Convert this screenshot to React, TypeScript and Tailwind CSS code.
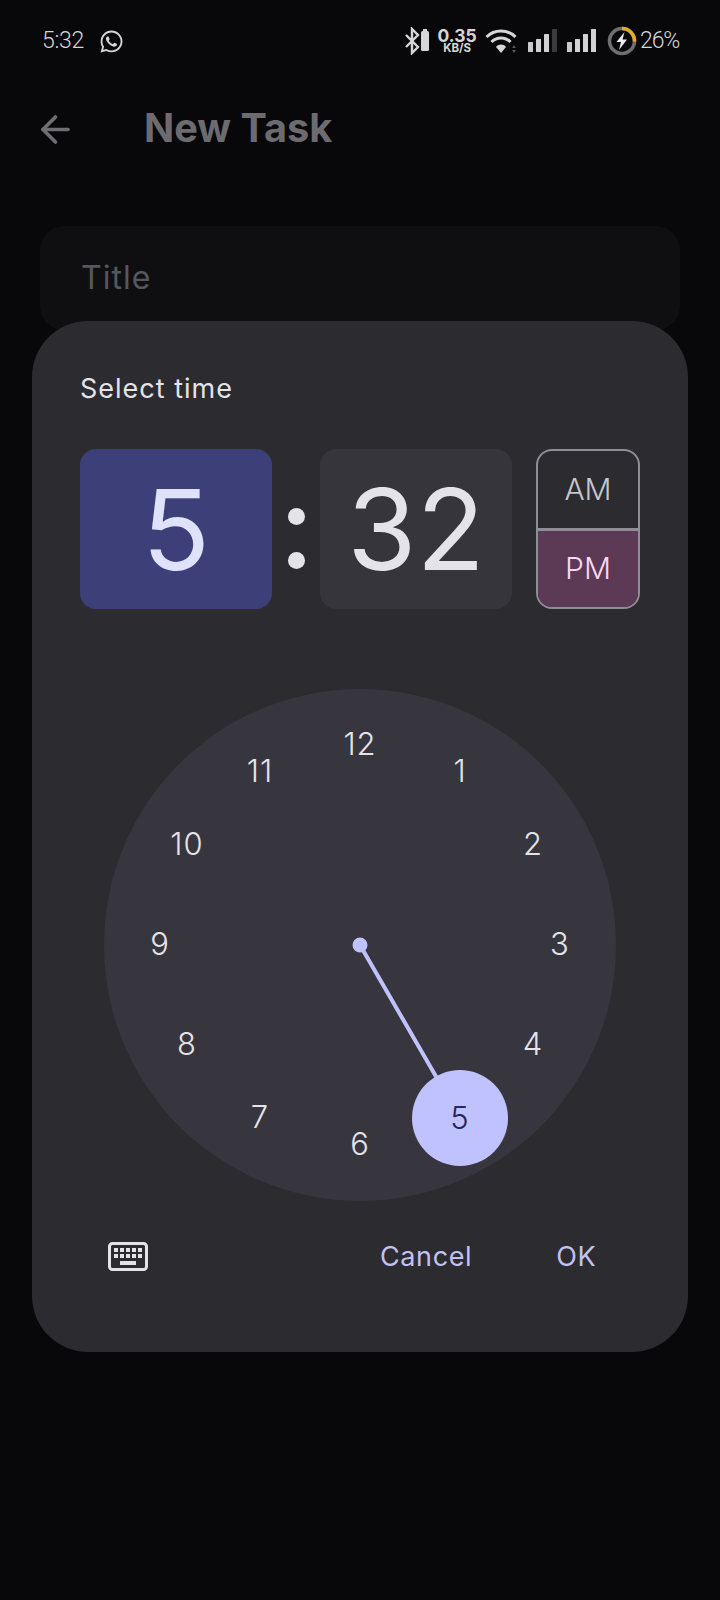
import { ArrowLeft } from "lucide-react";
import { FaWhatsapp } from "react-icons/fa";

const dialNumbers = [
  { label: "12", x: 200, y: 55 },
  { label: "1", x: 300, y: 82 },
  { label: "2", x: 373, y: 155 },
  { label: "3", x: 400, y: 255 },
  { label: "4", x: 373, y: 355 },
  { label: "6", x: 200, y: 455 },
  { label: "7", x: 100, y: 428 },
  { label: "8", x: 27, y: 355 },
  { label: "9", x: 0, y: 255 },
  { label: "10", x: 27, y: 155 },
  { label: "11", x: 100, y: 82 },
];

function Signal({ dimLast }: { dimLast?: boolean }) {
  return (
    <svg width="31" height="24" viewBox="0 0 31 24">
      <rect x="1" y="13" width="5" height="10" rx="0.5" fill="#c9c9c9" />
      <rect x="9" y="10" width="5" height="13" rx="0.5" fill="#d2d2d2" />
      <rect x="17" y="5" width="5" height="18" rx="0.5" fill="#d2d2d2" />
      <rect x="25" y="0" width="5" height="23" rx="0.5" fill={dimLast ? "#3a3a3a" : "#d2d2d2"} />
    </svg>
  );
}

function StatusBar() {
  return (
    <div className="flex h-[82px] items-center justify-between pl-[42px] pr-[41px] text-[#d6d6d6]">
      <div className="flex items-center gap-[15px]">
        <span className="font-['Roboto',sans-serif] text-[23px] font-light tracking-[-0.3px]">5:32</span>
        <FaWhatsapp size={25} color="#d6d6d6" />
      </div>
      <div className="flex items-center">
        <svg width="26" height="28" viewBox="0 0 26 28" fill="none" className="mr-[7px]">
          <path d="M2 8l12 12-6 6V2l6 6L2 20" stroke="#d6d6d6" strokeWidth="2.4" />
          <rect x="17" y="4" width="8" height="20" rx="1.5" fill="#d6d6d6" />
          <rect x="19" y="2" width="4" height="3" fill="#d6d6d6" />
        </svg>
        <div className="mr-[8px] flex w-[40px] flex-col items-center font-bold leading-none">
          <span className="text-[17.5px] leading-[15px]">0.35</span>
          <span className="text-[11.5px] leading-[11px]">KB/S</span>
        </div>
        <svg width="34" height="26" viewBox="0 0 34 26" fill="none" className="mr-[8px]">
          <path d="M1.5 9C9.5 1 22.5 1 30.5 9" stroke="#d6d6d6" strokeWidth="3" />
          <path d="M6.5 14C11.5 8.5 20.5 8.5 25.5 14" stroke="#d6d6d6" strokeWidth="3" />
          <path d="M11 19C13.8 15.8 18.2 15.8 21 19L16 25Z" fill="#d6d6d6" />
          <path d="M29 17l2 3h-4zM29 25l2-3h-4z" fill="#555" />
        </svg>
        <Signal dimLast />
        <div className="w-[8px]" />
        <Signal />
        <svg width="30" height="30" viewBox="0 0 30 30" fill="none" className="ml-[10px] mr-[3px]">
          <circle cx="15" cy="15" r="12.5" stroke="#6f6f6f" strokeWidth="3.6" />
          <path d="M15 2.5A12.5 12.5 0 0 1 27.5 15.6" stroke="#e2a92b" strokeWidth="3.6" />
          <path d="M17.5 6l-8 10h4.5l-2 8 8-10.500h-4.500z" fill="#ececec" />
        </svg>
        <span className="font-['Roboto',sans-serif] text-[23px] font-light tracking-[-1.2px]">26%</span>
      </div>
    </div>
  );
}

function TimeField({ value, active }: { value: string; active?: boolean }) {
  return (
    <div
      className={`flex h-[160px] w-[192px] items-center justify-center rounded-[16px] text-[112px] font-normal leading-none ${
        active ? "bg-[#3d4078] text-[#e0e1fb]" : "bg-[#36353c] text-[#e4e3e8]"
      }`}
    >
      {value}
    </div>
  );
}

function Dial() {
  return (
    <div className="relative mx-auto mt-[80px] h-[512px] w-[512px] rounded-full bg-[#37363e] text-[31px] font-light tracking-[1px] text-[#e4e3e8]">
      <svg width="512" height="512" viewBox="0 0 512 512" className="absolute left-0 top-0">
        <circle cx="256" cy="256" r="7.5" fill="#c0c2ff" />
        <line x1="256" y1="256" x2="356" y2="429" stroke="#c0c2ff" strokeWidth="4" />
      </svg>
      {dialNumbers.map((n) => (
        <span
          key={n.label}
          className="absolute flex h-[48px] w-[48px] items-center justify-center"
          style={{ left: n.x + 56 - 24, top: n.y - 24 }}
        >
          {n.label}
        </span>
      ))}
      <span className="absolute left-[308px] top-[381px] flex h-[96px] w-[96px] items-center justify-center rounded-full bg-[#c0c2ff] text-[#24265c]">
        5
      </span>
    </div>
  );
}

function KeyboardIcon() {
  return (
    <svg width="40" height="29" viewBox="0 0 40 29" fill="none">
      <rect x="1.5" y="1.500" width="37" height="26" rx="3" stroke="#e4e3e8" strokeWidth="3" />
      <path
        d="M6 6h4v4H6zM12 6h4v4h-4zM18 6h4v4h-4zM24 6h4v4h-4zM30 6h4v4h-4zM6 12h4v4H6zM12 12h4v4h-4zM18 12h4v4h-4zM24 12h4v4h-4zM30 12h4v4h-4zM12 19h16v4H12z"
        fill="#e4e3e8"
      />
    </svg>
  );
}

function TimePickerDialog() {
  return (
    <div className="absolute left-[32px] top-[321px] h-[1031px] w-[656px] rounded-[56px] bg-[#2b2b30] px-[48px] pt-[48px]">
      <div className="text-[27px] leading-[40px] tracking-[1px] text-[#e4e3e8]">Select time</div>
      <div className="mt-[40px] flex items-center">
        <TimeField value="5" active />
        <div className="mt-[18px] flex w-[48px] flex-col items-center gap-[27px]">
          <span className="h-[17px] w-[17px] rounded-full bg-[#e4e3e8]" />
          <span className="h-[17px] w-[17px] rounded-full bg-[#e4e3e8]" />
        </div>
        <TimeField value="32" />
        <div className="ml-[24px] flex h-[160px] w-[104px] flex-col overflow-hidden rounded-[16px] border-2 border-[#8e8e94] text-[30px] font-light">
          <div className="flex flex-1 items-center justify-center border-b-[3px] border-[#8e8e94] text-[#c7c6cc]">AM</div>
          <div className="flex flex-1 items-center justify-center bg-[#5c3a55] text-[#fbd7f3]">PM</div>
        </div>
      </div>
      <Dial />
      <div className="mt-[36px] flex items-center text-[27px] tracking-[0.6px] text-[#c0c2f0]">
        <div className="-mt-[2px] ml-[28px]">
          <KeyboardIcon />
        </div>
        <span className="ml-[232px]">Cancel</span>
        <span className="ml-[84px]">OK</span>
      </div>
    </div>
  );
}

export default function App() {
  return (
    <div className="relative h-[1600px] w-[720px] overflow-hidden bg-[#08080b] font-['Inter',sans-serif]">
      <StatusBar />
      <div className="flex h-[94px] items-center pl-[34px]">
        <ArrowLeft size={43} color="#6e6e73" strokeWidth={2} />
        <span className="ml-[67px] text-[39.700px] font-bold text-[#6b6b70]">New Task</span>
      </div>
      <div className="mx-[40px] mt-[50px] flex h-[104px] items-center rounded-[24px] bg-[#0f0f12] pl-[41px] text-[32px] tracking-[1px] text-[#57575b]">
        Title
      </div>
      <TimePickerDialog />
    </div>
  );
}
